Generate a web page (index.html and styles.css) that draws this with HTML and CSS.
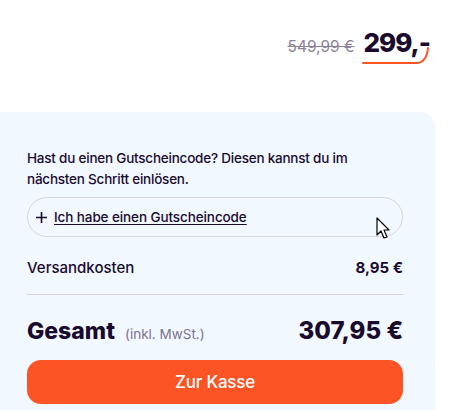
FILE: index.html
```html
<!DOCTYPE html>
<html lang="de">
<head>
<meta charset="utf-8">
<link rel="stylesheet" href="styles.css">
</head>
<body>
<div class="top">
  <div class="price">
    <span class="old">549,99 €</span>
    <span class="new">299,-
      <svg class="swoosh" width="70" height="20" viewBox="0 0 70 20"><path d="M1 17 H54 C61 17 65 12 66 2" fill="none" stroke="#fd5426" stroke-width="2" stroke-linecap="round"/></svg>
    </span>
  </div>
</div>
<div class="panel">
  <p class="hint">Hast du einen Gutscheincode? Diesen kannst du im nächsten Schritt einlösen.</p>
  <div class="coupon">
    <svg class="plus" width="11" height="11" viewBox="0 0 11 11"><path d="M5.5 0 V11 M0 5.5 H11" stroke="#1a0b2e" stroke-width="1.6"/></svg>
    <span class="coupon-link">Ich habe einen Gutscheincode</span>
    <svg class="cursor" width="16" height="24" viewBox="0 0 16 24"><path d="M1 1 L1 18 L5 14 L8 21 L11 20 L8 13 L13 13 Z" fill="#fff" stroke="#000" stroke-width="1.2" stroke-linejoin="round"/></svg>
  </div>
  <div class="row ship">
    <span>Versandkosten</span>
    <span class="bold">8,95 €</span>
  </div>
  <div class="row total">
    <span class="label">Gesamt <span class="tax">(inkl. MwSt.)</span></span>
    <span class="sum">307,95 €</span>
  </div>
  <button class="checkout">Zur Kasse</button>
</div>
</body>
</html>
```
FILE: styles.css
```css
* { box-sizing: border-box; }
body {
  margin: 0;
  font-family: Inter, "Noto Sans", sans-serif;
  color: #1a0b2e;
  background: #fff;
  overflow: hidden;
}
.top {
  height: 112px;
  display: flex;
  justify-content: flex-end;
  padding: 27px 20px 0 0;
}
.price {
  display: flex;
  align-items: baseline;
  gap: 9px;
  height: 32px;
}
.old {
  font-size: 15.5px;
  color: #8b8299;
  text-decoration: line-through;
  letter-spacing: 0;
}
.new {
  position: relative;
  font-size: 26px;
  font-weight: 800;
  letter-spacing: -1px;
}
.swoosh {
  position: absolute;
  left: -1px;
  top: 19px;
}
.panel {
  margin-right: 15px;
  background: #f1f8ff;
  border-top-right-radius: 15px;
  padding: 36px 32px 20px 27px;
  height: 310px;
}
.hint {
  margin: 0;
  font-size: 13.5px;
  line-height: 21px;
  letter-spacing: -0.22px;
  font-weight: 500;
}
.coupon {
  position: relative;
  margin-top: 7px;
  height: 40px;
  border: 1px solid #d8d2e0;
  border-radius: 20px;
  display: flex;
  align-items: center;
  padding-left: 8px;
  gap: 7px;
  font-size: 13.5px;
  font-weight: 500;
  letter-spacing: -0.1px;
}
.plus {
  flex: none;
}
.coupon-link { text-decoration: underline; text-underline-offset: 2px; }
.cursor {
  position: absolute;
  left: 348px;
  top: 19px;
}
.row {
  display: flex;
  justify-content: space-between;
  align-items: baseline;
}
.ship {
  margin-top: 21px;
  font-size: 15px;
  font-weight: 500;
  letter-spacing: 0;
  padding-bottom: 17px;
  border-bottom: 1px solid #d5d0dd;
}
.bold { font-weight: 700; }
.total {
  margin-top: 21px;
}
.label {
  font-size: 23px;
  font-weight: 800;
  letter-spacing: 0;
}
.tax {
  font-size: 13.5px;
  font-weight: 400;
  color: #7d7390;
  margin-left: 5px;
  letter-spacing: 0;
}
.sum {
  font-size: 24px;
  font-weight: 800;
  letter-spacing: 0;
}
.checkout {
  margin-top: 15px;
  width: 100%;
  height: 44px;
  border: 0;
  border-radius: 14px;
  background: #fd5426;
  color: #fff;
  font-family: inherit;
  font-size: 17px;
  font-weight: 500;
  letter-spacing: -0.2px;
}
```
